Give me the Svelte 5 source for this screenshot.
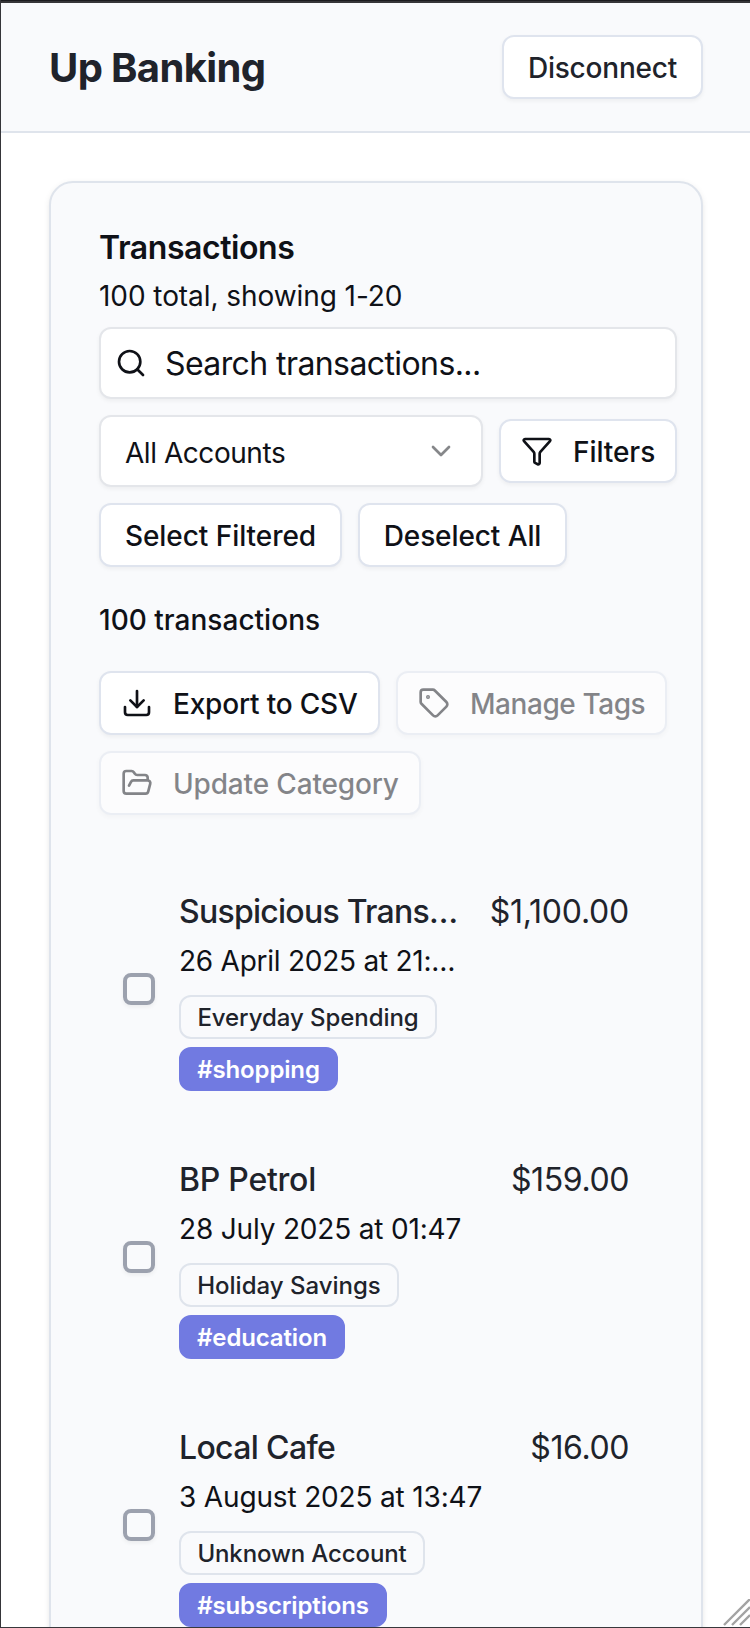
<script>
  const transactions = [
    {
      name: 'Suspicious Trans…', nameSpacing: -0.74,
      date: '26 April 2025 at 21:…', dateSpacing: -0.25,
      amount: '$1,100.00', amountSpacing: -0.23,
      account: 'Everyday Spending', accountWidth: 258, accountSpacing: -0.06,
      tag: '#shopping', tagWidth: 159, tagSpacing: -0.15
    },
    {
      name: 'BP Petrol', nameSpacing: -0.25,
      date: '28 July 2025 at 01:47', dateSpacing: -0.18,
      amount: '$159.00', amountSpacing: -0.4,
      account: 'Holiday Savings', accountWidth: 220, accountSpacing: 0,
      tag: '#education', tagWidth: 166, tagSpacing: -0.15
    },
    {
      name: 'Local Cafe', nameSpacing: -0.65,
      date: '3 August 2025 at 13:47', dateSpacing: -0.16,
      amount: '$16.00', amountSpacing: -0.4,
      account: 'Unknown Account', accountWidth: 246, accountSpacing: -0.12,
      tag: '#subscriptions', tagWidth: 208, tagSpacing: -0.15
    }
  ];
</script>

<div class="page">
  <div class="edge"></div>
  <header>
    <h1>Up Banking</h1>
    <button class="btn disconnect"><span>Disconnect</span></button>
  </header>

  <main>
    <section class="card">
      <h2>Transactions</h2>
      <p class="summary">100 total, showing 1-20</p>

      <div class="search">
        <svg class="icon" viewBox="0 0 24 24"><path d="m21 21-4.34-4.34" /><circle cx="11" cy="11" r="8" /></svg>
        <span>Search transactions...</span>
      </div>

      <div class="controls">
        <div class="select">
          <span>All Accounts</span>
          <svg class="icon chevron" viewBox="0 0 24 24"><path d="m6 9 6 6 6-6" /></svg>
        </div>
        <button class="btn with-icon filters">
          <svg class="icon" viewBox="0 0 24 24"><path d="M10 20a1 1 0 0 0 .553.895l2 1A1 1 0 0 0 14 21v-7a2 2 0 0 1 .517-1.341L21.74 4.67A1 1 0 0 0 21 3H3a1 1 0 0 0-.742 1.67l7.225 7.989A2 2 0 0 1 10 14z" /></svg>
          <span>Filters</span>
        </button>
      </div>

      <div class="controls selection">
        <button class="btn select-filtered"><span>Select Filtered</span></button>
        <button class="btn deselect"><span>Deselect All</span></button>
      </div>

      <p class="count">100 transactions</p>

      <div class="actions">
        <button class="btn with-icon export">
          <svg class="icon" viewBox="0 0 24 24"><path d="M12 15V3" /><path d="M21 15v4a2 2 0 0 1-2 2H5a2 2 0 0 1-2-2v-4" /><path d="m7 10 5 5 5-5" /></svg>
          <span>Export to CSV</span>
        </button>
        <button class="btn with-icon manage" disabled>
          <svg class="icon" viewBox="0 0 24 24"><path d="M12.586 2.586A2 2 0 0 0 11.172 2H4a2 2 0 0 0-2 2v7.172a2 2 0 0 0 .586 1.414l8.704 8.704a2.426 2.426 0 0 0 3.42 0l6.58-6.58a2.426 2.426 0 0 0 0-3.42z" /><circle cx="7.5" cy="7.5" r=".5" fill="currentColor" /></svg>
          <span>Manage Tags</span>
        </button>
        <button class="btn with-icon update" disabled>
          <svg class="icon" viewBox="0 0 24 24"><path d="m6 14 1.5-2.9A2 2 0 0 1 9.24 10H20a2 2 0 0 1 1.94 2.5l-1.54 6a2 2 0 0 1-1.95 1.5H4a2 2 0 0 1-2-2V5a2 2 0 0 1 2-2h3.9a2 2 0 0 1 1.69.9l.81 1.2a2 2 0 0 0 1.67.9H18a2 2 0 0 1 2 2v2" /></svg>
          <span>Update Category</span>
        </button>
      </div>

      <ul>
        {#each transactions as t}
          <li>
            <span class="checkbox" role="checkbox" aria-checked="false" tabindex="0" aria-label={t.name}></span>
            <div class="body">
              <div class="info">
                <div class="name" style:letter-spacing="{t.nameSpacing}px">{t.name}</div>
                <div class="date" style:letter-spacing="{t.dateSpacing}px">{t.date}</div>
                <div class="badges">
                  <span class="badge" style:width="{t.accountWidth}px" style:letter-spacing="{t.accountSpacing}px">{t.account}</span>
                  <span class="badge tag" style:width="{t.tagWidth}px" style:letter-spacing="{t.tagSpacing}px">{t.tag}</span>
                </div>
              </div>
              <div class="amount" style:letter-spacing="{t.amountSpacing}px">{t.amount}</div>
            </div>
          </li>
        {/each}
      </ul>
    </section>
  </main>

  <svg class="grip" viewBox="0 0 27 27"><path d="M1 26 27 0M9 26 27 8M17 26 27 16" /></svg>
</div>

<style>
  :global(body) { background: #fff; overflow: hidden; }
  * { box-sizing: border-box; }

  .page {
    position: relative;
    height: 1628px;
    overflow: hidden;
    border-left: 1px solid #353539;
    border-bottom: 1px solid #38383c;
    background: #fff;
    color: #0f1117;
    font-family: Inter, "Liberation Sans", sans-serif;
    font-size: 28px;
    line-height: 40px;
  }
  .edge { height: 3px; background: #363639; border-top: 1px solid #1c1c1f; }

  header {
    height: 130px;
    padding: 0 47px 0 48px;
    display: flex;
    align-items: center;
    justify-content: space-between;
    background: #f9fafc;
    border-bottom: 2px solid #dfe4ec;
  }
  h1 { margin: 0; padding-top: 2px; font-size: 40px; line-height: 56px; font-weight: 700; letter-spacing: -0.65px; color: #20232b; }

  main { padding: 48px 47px 0 48px; }
  .card {
    height: 1600px;
    padding: 48px 24px 0 48px;
    background: #f9fafc;
    border: 2px solid #dfe4ec;
    border-radius: 24px;
    box-shadow: 0 2px 6px rgba(0, 0, 0, 0.08), 0 2px 4px -2px rgba(0, 0, 0, 0.08);
  }
  h2 { margin: 0 0 11px; font-size: 32px; line-height: 34px; font-weight: 600; letter-spacing: -0.43px; }
  p { margin: 0; }
  .summary { margin-bottom: 11px; letter-spacing: -0.07px; }

  .search, .select {
    height: 72px;
    display: flex;
    align-items: center;
    background: #fff;
    border: 2px solid #e4e6ea;
    border-radius: 12px;
    box-shadow: 0 2px 4px rgba(0, 0, 0, 0.05);
  }
  .search { padding-left: 14px; gap: 18px; font-size: 32px; letter-spacing: -0.59px; }
  .search span { padding-top: 2px; }
  .select { width: 384px; padding: 0 24px; justify-content: space-between; letter-spacing: -0.45px; }
  .select span { padding-top: 3px; }
  .btn span { padding-top: 2px; }

  .icon {
    width: 32px;
    height: 32px;
    flex: none;
    fill: none;
    stroke: currentColor;
    stroke-width: 2;
    stroke-linecap: round;
    stroke-linejoin: round;
  }
  .chevron { opacity: 0.5; }

  .btn {
    height: 64px;
    padding: 0;
    display: flex;
    align-items: center;
    justify-content: center;
    font: inherit;
    font-weight: 500;
    color: #0f1117;
    white-space: nowrap;
    background: #fff;
    border: 2px solid #dfe4ee;
    border-radius: 12px;
    box-shadow: 0 2px 4px rgba(0, 0, 0, 0.05);
  }
  .btn:disabled { opacity: 0.5; }
  .with-icon { justify-content: flex-start; padding-left: 20px; gap: 20px; }
  .disconnect { width: 201px; letter-spacing: -0.2px; color: #20232b; }
  .filters { width: 178px; letter-spacing: -0.07px; }
  .select-filtered { width: 243px; letter-spacing: -0.05px; }
  .deselect { width: 209px; letter-spacing: -0.1px; }
  .export { width: 281px; letter-spacing: -0.19px; }
  .manage { width: 271px; letter-spacing: -0.44px; }
  .update { width: 322px; letter-spacing: -0.16px; }

  .controls { display: flex; align-items: center; gap: 16px; margin-top: 16px; }
  .count { margin: 33px 0 31px; font-weight: 500; letter-spacing: 0.02px; }
  .actions { display: flex; flex-wrap: wrap; gap: 16px; }

  ul { list-style: none; margin: 40px 0 0; padding: 0 48px 0 24px; }
  li { display: flex; align-items: center; gap: 24px; height: 268px; padding: 32px 0; }
  .checkbox {
    width: 32px;
    height: 32px;
    flex: none;
    border: 4px solid #9ca1ae;
    border-radius: 8px;
    box-shadow: 0 2px 4px rgba(0, 0, 0, 0.06);
  }
  .body { flex: 1; display: flex; justify-content: space-between; align-items: flex-start; }
  .name, .amount { height: 49px; font-size: 32px; line-height: 50px; color: #20232b; white-space: nowrap; }
  .name { font-weight: 500; }
  .date { margin-top: 5px; white-space: nowrap; }
  .badges { display: flex; flex-direction: column; align-items: flex-start; gap: 8px; margin-top: 14px; }
  .badge {
    display: flex;
    align-items: center;
    justify-content: center;
    height: 44px;
    padding-top: 2px;
    font-size: 24px;
    line-height: 32px;
    font-weight: 500;
    color: #20232b;
    white-space: nowrap;
    border: 2px solid #dfe4ec;
    border-radius: 12px;
  }
  .tag { font-weight: 600; color: #fff; background: #717ae1; border-color: #717ae1; }

  .grip {
    position: absolute;
    right: 0;
    bottom: 1px;
    width: 27px;
    height: 27px;
    fill: none;
    stroke: #a3a3a3;
    stroke-width: 2.4;
  }
</style>
